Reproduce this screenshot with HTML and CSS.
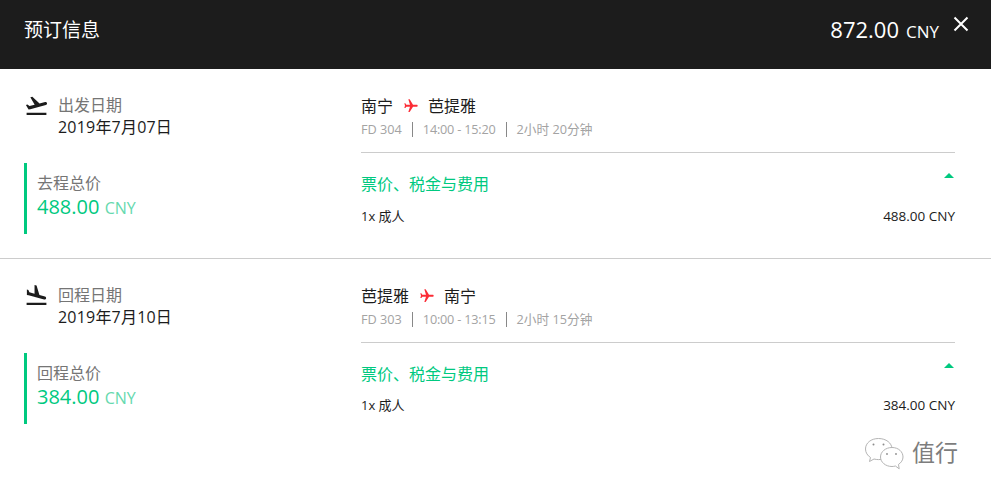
FILE: index.html
```html
<!DOCTYPE html>
<html lang="zh-CN">
<head>
  <meta charset="UTF-8">
  <title>预订信息</title>
  <link rel="stylesheet" href="styles.css">
</head>
<body>
  <header class="header">
    <h1 class="header-title">预订信息</h1>
    <div class="header-total">
      <span class="header-amount">872.00</span>
      <span class="header-currency">CNY</span>
      <svg class="close" viewBox="0 0 16 16" width="16" height="16"><path d="M1.500 1.500l13 13M14.500 1.500l-13 13" stroke="#fff" stroke-width="2" fill="none"/></svg>
    </div>
  </header>

  <!-- 去程 -->
  <section class="segment segment-first">
    <div class="segment-left">
      <div class="date-row">
        <svg class="plane-icon" viewBox="0 0 24 24" width="25" height="25"><path d="M2.500 19h19v2h-19zm19.570-9.360c-.21-.8-1.040-1.280-1.840-1.060L14.920 10l-6.900-6.430-1.930.51 4.140 7.170-4.970 1.330-1.970-1.540-1.450.39 1.820 3.160.77 1.330 1.600-.43 5.310-1.420 4.350-1.160L21 11.490c.81-.23 1.280-1.050 1.070-1.850z" fill="#1c1c1c"/></svg>
        <div class="date-text">
          <div class="date-label">出发日期</div>
          <div class="date-value">2019年7月07日</div>
        </div>
      </div>
      <div class="price-box">
        <div class="price-label">去程总价</div>
        <div class="price-value">488.00 <span class="price-currency">CNY</span></div>
      </div>
    </div>
    <div class="segment-right">
      <div class="route">
        <span>南宁</span>
        <svg class="route-icon" viewBox="0 0 24 24" width="16" height="16"><path transform="rotate(90 12 12)" d="M21 16v-2l-8-5V3.500c0-.83-.67-1.500-1.500-1.500S10 2.670 10 3.500V9l-8 5v2l8-2.500V19l-2 1.500V22l3.500-1 3.500 1v-1.500L13 19v-5.500l8 2.500z" fill="#fb2c36"/></svg>
        <span>芭提雅</span>
      </div>
      <div class="flight-info">
        <span>FD 304</span>
        <span class="sep"></span>
        <span class="flight-time">14:00 - 15:20</span>
        <span class="sep"></span>
        <span>2小时 20分钟</span>
      </div>
      <div class="fare-head">
        <span class="fare-title">票价、税金与费用</span>
        <span class="caret"></span>
      </div>
      <div class="fare-row">
        <span>1x 成人</span>
        <span class="fare-amount">488.00 CNY</span>
      </div>
    </div>
  </section>

  <!-- 回程 -->
  <section class="segment segment-return">
    <div class="segment-left">
      <div class="date-row">
        <svg class="plane-icon" viewBox="0 0 24 24" width="25" height="25"><path d="M2.500 19h19v2h-19zm7.180-5.730l4.350 1.160 5.310 1.420c.8.21 1.620-.26 1.840-1.060.21-.8-.26-1.620-1.060-1.840l-5.310-1.420-2.760-9.020L10.120 2v8.280L5.150 8.950l-.93-2.320-1.450-.39v5.170l1.600.43 5.310 1.430z" fill="#1c1c1c"/></svg>
        <div class="date-text">
          <div class="date-label">回程日期</div>
          <div class="date-value">2019年7月10日</div>
        </div>
      </div>
      <div class="price-box">
        <div class="price-label">回程总价</div>
        <div class="price-value">384.00 <span class="price-currency">CNY</span></div>
      </div>
    </div>
    <div class="segment-right">
      <div class="route">
        <span>芭提雅</span>
        <svg class="route-icon" viewBox="0 0 24 24" width="16" height="16"><path transform="rotate(90 12 12)" d="M21 16v-2l-8-5V3.500c0-.83-.67-1.500-1.500-1.500S10 2.670 10 3.500V9l-8 5v2l8-2.500V19l-2 1.500V22l3.500-1 3.500 1v-1.500L13 19v-5.500l8 2.500z" fill="#fb2c36"/></svg>
        <span>南宁</span>
      </div>
      <div class="flight-info">
        <span>FD 303</span>
        <span class="sep"></span>
        <span class="flight-time">10:00 - 13:15</span>
        <span class="sep"></span>
        <span>2小时 15分钟</span>
      </div>
      <div class="fare-head">
        <span class="fare-title">票价、税金与费用</span>
        <span class="caret"></span>
      </div>
      <div class="fare-row">
        <span>1x 成人</span>
        <span class="fare-amount">384.00 CNY</span>
      </div>
    </div>
  </section>

  <!-- 水印 -->
  <div class="watermark">
    <svg viewBox="0 0 40 33" width="40" height="33"><g fill="#fff" stroke="#b4b4b4" stroke-width="1"><path d="M14.500 1.500C7 1.500 1.500 6 1.500 12c0 3.600 2 6.600 5 8.500l-1 4 4.500-2.500c1.500.4 3 .6 4.500.6 7 0 13.500-4.600 13.500-10.600S22 1.500 14.500 1.500z"/><path d="M28 10.500c-6.500 0-11.500 4.300-11.500 9.500s5 9.500 11.500 9.500c1.200 0 2.300-.2 3.400-.5l3.800 2.800-.7-4.400c2.700-1.700 4.500-4.400 4.500-7.400 0-5.200-4.500-9.500-11-9.500z"/></g><g fill="#8c8c8c"><circle cx="9.500" cy="7.500" r="1"/><circle cx="19.500" cy="7.500" r="1"/><circle cx="23" cy="17" r=".9"/><circle cx="32" cy="17" r=".9"/></g></svg>
    <span class="watermark-text">值行</span>
  </div>
</body>
</html>
```

FILE: styles.css
```css
html, body {
  margin: 0;
  padding: 0;
  height: 100%;
  overflow: hidden;
  background-color: #fff;
  color: #1c1c1c;
  font-family: 'Open Sans', 'Noto Sans CJK SC', sans-serif;
}

.header {
  height: 69px;
  box-sizing: border-box;
  padding: 0 22px 11px 24px;
  background-color: #1c1c1c;
  color: #fff;
  display: flex;
  justify-content: space-between;
  align-items: center;
}

.header-title {
  margin: 0;
  font-size: 19px;
  font-weight: 400;
}

.header-total {
  display: flex;
  align-items: baseline;
  gap: 7px;
}

.header-amount {
  font-size: 22px;
}

.header-currency {
  font-size: 17px;
}

.close {
  margin-left: 7px;
  align-self: flex-start;
  margin-top: 2px;
}

.segment {
  display: flex;
  height: 189px;
  box-sizing: border-box;
  padding: 24px 36px 0 24px;
}

.segment-first {
  height: 190px;
  border-bottom: 1px solid #ccc;
}

.segment-left {
  width: 337px;
  flex-shrink: 0;
}

.segment-right {
  flex: 1;
}

.date-row {
  display: flex;
  gap: 9px;
  height: 70px;
}

.date-text {
  padding-top: 1px;
}

.date-label {
  font-size: 16px;
  line-height: 22px;
  color: #757575;
}

.date-value {
  font-size: 16px;
  line-height: 22px;
  letter-spacing: 0.2px;
  color: #1c1c1c;
}

.price-box {
  height: 71px;
  box-sizing: border-box;
  padding: 9px 0 0 10px;
  border-left: 3px solid #00c97f;
}

.price-label {
  font-size: 16px;
  line-height: 23px;
  color: #757575;
}

.price-value {
  font-size: 20px;
  line-height: 24px;
  font-weight: 500;
  color: #00c97f;
}

.price-currency {
  font-size: 16px;
  font-weight: 400;
  color: #66d9ae;
}

.route {
  display: flex;
  align-items: center;
  gap: 10px;
  padding-top: 1px;
  font-size: 16px;
  line-height: 24px;
}

.route-icon {
  margin-right: -1px;
}

.flight-info {
  display: flex;
  align-items: center;
  gap: 10px;
  margin-top: 1px;
  padding-bottom: 12px;
  border-bottom: 1px solid #ccc;
  font-size: 12.700px;
  line-height: 21px;
  color: #a3a3a3;
}

.flight-time {
  letter-spacing: -0.2px;
}

.sep {
  width: 1px;
  height: 15px;
  background-color: #888;
}

.fare-head {
  display: flex;
  justify-content: space-between;
  margin-top: 19px;
}

.fare-title {
  font-size: 16px;
  line-height: 24px;
  color: #00c97f;
}

.caret {
  width: 0;
  height: 0;
  margin: 1px 1px 0 0;
  border-left: 5px solid transparent;
  border-right: 5px solid transparent;
  border-bottom: 5px solid #00c97f;
}

.fare-row {
  display: flex;
  justify-content: space-between;
  margin-top: 9px;
  font-size: 13px;
  line-height: 22px;
  color: #1c1c1c;
}

.segment-return .fare-row {
  margin-top: 8px;
}

.fare-amount {
  font-size: 13.500px;
}

.watermark {
  position: absolute;
  left: 864px;
  top: 437px;
  display: flex;
  align-items: center;
  gap: 8px;
}

.watermark-text {
  padding-bottom: 3px;
  font-size: 23px;
  line-height: 29px;
  color: #7d7d7d;
}
```
